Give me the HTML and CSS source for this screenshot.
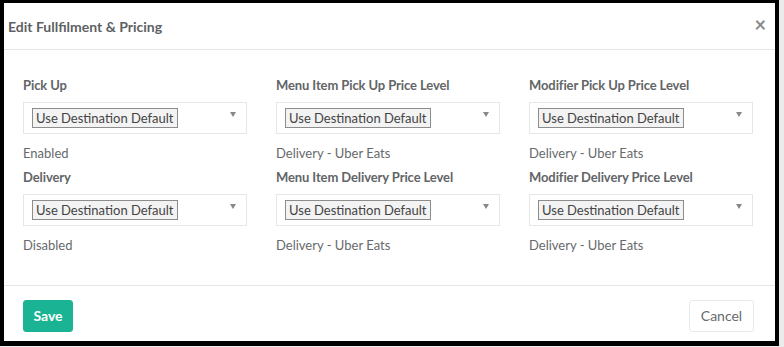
FILE: index.html
```html
<!DOCTYPE html>
<html lang="en">

<head>
  <meta charset="UTF-8">
  <meta name="viewport" content="width=device-width, initial-scale=1">
  <title>Edit Fullfilment &amp; Pricing</title>
  <link rel="stylesheet" href="styles.css">
</head>

<body>

  <div class="modal">
    <div class="modal-header">
      <h4>Edit Fullfilment &amp; Pricing</h4>
      <span class="close">&times;</span>
    </div>

    <div class="modal-body">
      <div class="field">
        <label>Pick Up</label>
        <div class="select"><span class="tag">Use Destination Default</span><span class="caret"></span></div>
        <p class="help">Enabled</p>
      </div>
      <div class="field">
        <label>Menu Item Pick Up Price Level</label>
        <div class="select"><span class="tag">Use Destination Default</span><span class="caret"></span></div>
        <p class="help">Delivery - Uber Eats</p>
      </div>
      <div class="field">
        <label>Modifier Pick Up Price Level</label>
        <div class="select"><span class="tag">Use Destination Default</span><span class="caret"></span></div>
        <p class="help">Delivery - Uber Eats</p>
      </div>

      <div class="field">
        <label>Delivery</label>
        <div class="select"><span class="tag">Use Destination Default</span><span class="caret"></span></div>
        <p class="help">Disabled</p>
      </div>
      <div class="field">
        <label>Menu Item Delivery Price Level</label>
        <div class="select"><span class="tag">Use Destination Default</span><span class="caret"></span></div>
        <p class="help">Delivery - Uber Eats</p>
      </div>
      <div class="field">
        <label>Modifier Delivery Price Level</label>
        <div class="select"><span class="tag">Use Destination Default</span><span class="caret"></span></div>
        <p class="help">Delivery - Uber Eats</p>
      </div>
    </div>

    <div class="modal-footer">
      <button class="btn-save">Save</button>
      <button class="btn-cancel">Cancel</button>
    </div>
  </div>

</body>

</html>
```

FILE: styles.css
```css
body {
  font-family: 'Lato', 'Open Sans', sans-serif;
  background-color: #ececec;
  margin: 0;
  color: #676a6c;
}

.modal {
  width: 771px;
  height: 338px;
  background: white;
  border-style: solid;
  border-color: #000;
  border-width: 3px 4px 5px 4px;
  display: flex;
  flex-direction: column;
}

.modal-header {
  height: 46px;
  border-bottom: 1px solid #e5e5e5;
  display: flex;
  align-items: center;
  justify-content: space-between;
  padding: 0 9px 0 4px;
}

.modal-header h4 {
  margin: 0;
  font-size: 14px;
  font-weight: 700;
  color: #5e6163;
}

.close {
  font-size: 20px;
  font-weight: 700;
  color: #8a8a8a;
  line-height: 1;
  margin-top: -4px;
}

.modal-body {
  flex: 1;
  display: grid;
  grid-template-columns: repeat(3, 224px);
  column-gap: 29px;
  align-content: start;
  padding: 26px 19px 0 19px;
}

.field label {
  display: block;
  font-size: 13px;
  font-weight: 700;
  line-height: 18px;
  color: #626567;
  margin-bottom: 8px;
  letter-spacing: -0.1px;
}

.select {
  position: relative;
  box-sizing: border-box;
  height: 32px;
  border: 1px solid #e5e6e7;
  padding: 4px 8px 0 8px;
}

.tag {
  display: inline-block;
  font-size: 13px;
  line-height: 18px;
  color: #444;
  background: #f3f3f3;
  border: 1px solid #8c8c8c;
  padding: 0 3px;
}

.caret {
  position: absolute;
  right: 10px;
  top: 9px;
  width: 0;
  height: 0;
  border-left: 3px solid transparent;
  border-right: 3px solid transparent;
  border-top: 5px solid #888;
}

.help {
  margin: 10px 0 6px 0;
  font-size: 13px;
  line-height: 18px;
}

.modal-footer {
  border-top: 1px solid #e5e5e5;
  display: flex;
  justify-content: space-between;
  align-items: flex-start;
  padding: 14px 21px 0 19px;
  height: 41px;
}

.btn-save,
.btn-cancel {
  font-family: inherit;
  font-size: 14px;
  height: 32px;
  border-radius: 3px;
  cursor: pointer;
  padding-bottom: 2px;
}

.btn-save {
  width: 50px;
  background-color: #1ab394;
  border: 1px solid #1ab394;
  color: white;
  font-weight: 700;
}

.btn-cancel {
  width: 65px;
  background: white;
  border: 1px solid #e7eaec;
  color: #676a6c;
}
```
